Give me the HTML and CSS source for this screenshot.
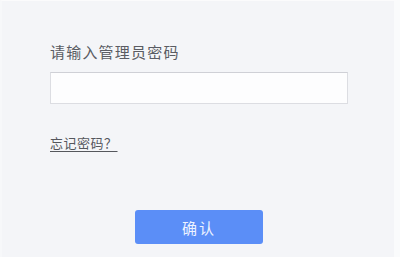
FILE: index.html
```html
<!DOCTYPE html>
<html lang="zh">
<head>
<meta charset="utf-8">
<link rel="stylesheet" href="styles.css">
</head>
<body>
<div class="frame">
  <div class="form">
    <label class="label">请输入管理员密码</label>
    <input class="input" type="password">
    <a class="forgot" href="#">忘记密码？</a>
    <div class="actions">
      <button class="btn">确认</button>
    </div>
  </div>
</div>
</body>
</html>
```
FILE: styles.css
```css
html, body {
  margin: 0;
  padding: 0;
  background: #f4f5f8;
}
.frame {
  width: 400px;
  height: 257px;
  box-sizing: border-box;
  border-top: 1px solid #fbfbfc;
  border-left: 2px solid #f7f8fa;
  border-right: 6px solid #fafbfc;
  background: #f4f5f8;
  font-family: "Noto Sans CJK SC", "Noto Sans", sans-serif;
}
.form {
  display: flex;
  flex-direction: column;
  padding: 40px 0 0 48px;
}
.label {
  font-size: 15px;
  line-height: 22px;
  color: #5a5c63;
  letter-spacing: 1.2px;
}
.input {
  margin-top: 9px;
  width: 298px;
  height: 32px;
  box-sizing: border-box;
  background: #fdfdfe;
  border: 1px solid #dcdde2;
  border-top-color: #cfd0d6;
  outline: none;
}
.forgot {
  margin-top: 30px;
  align-self: flex-start;
  font-size: 13px;
  line-height: 18px;
  color: #55575d;
  text-decoration: underline;
  text-underline-offset: 3px;
  letter-spacing: 0.5px;
}
.actions {
  display: flex;
  justify-content: center;
  margin-top: 58px;
  margin-left: -48px;
  padding-left: 2px;
}
.btn {
  width: 128px;
  height: 34px;
  border: none;
  border-radius: 3px;
  background: #5b8ef7;
  color: #eef3ff;
  font-family: "Noto Sans CJK SC", "Noto Sans", sans-serif;
  font-size: 15px;
  letter-spacing: 2px;
}
```
